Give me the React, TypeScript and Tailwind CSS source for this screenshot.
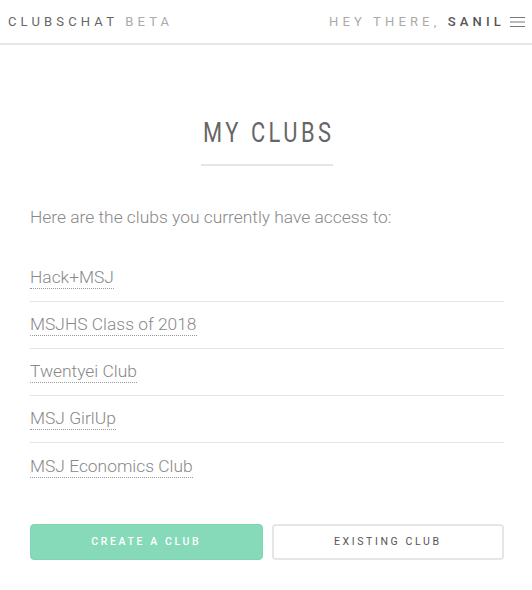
import * as React from "react"

const clubs = ["Hack+MSJ", "MSJHS Class of 2018", "Twentyei Club", "MSJ GirlUp", "MSJ Economics Club"]

export default function App() {
  return (
    <div className="min-h-[590px] bg-white font-['Roboto',sans-serif]">
      <header className="h-[45px] flex items-center justify-between pl-[8px] pr-[7px] border-b-2 border-[#e8e8e8]">
        <div className="text-[13px] tracking-[0.32em] leading-none">
          <span className="text-[#666]">CLUBSCHAT</span>{" "}
          <span className="text-[#aaa]">BETA</span>
        </div>
        <div className="flex items-center gap-[5px]">
          <div className="text-[13px] tracking-[0.32em] leading-none">
            <span className="text-[#aaa]">HEY THERE,</span>{" "}
            <span className="text-[#555] font-medium">SANIL</span>
          </div>
          <svg width="15" height="12" viewBox="0 0 15 12" className="text-[#777]">
            <path d="M0 1.5h15M0 6h15M0 10.5h15" stroke="currentColor" strokeWidth="1" />
          </svg>
        </div>
      </header>

      <main className="pl-[30px] pr-[28px] pt-[74px] pb-[30px]">
        <div className="flex flex-col items-center">
          <h1 className="inline-block origin-center scale-x-[0.78] text-[28px] leading-none text-[#666] tracking-[0.16em] pl-[4px]">
            MY CLUBS
          </h1>
          <div className="mt-[17px] w-[132px] h-[2px] bg-[#e6e6e6]"></div>
        </div>

        <p className="mt-[38px] text-[17.4px] font-light text-[#888]">
          Here are the clubs you currently have access to:
        </p>

        <ul className="mt-[25px]">
          {clubs.map((c, i) => (
            <li
              key={c}
              className={`h-[47px] flex items-center ${i < clubs.length - 1 ? "border-b border-[#e4e4e4]" : ""}`}
            >
              <a className="text-[17.4px] font-light text-[#888] leading-[20px] border-b border-dotted border-[#999] pb-[1px]">
                {c}
              </a>
            </li>
          ))}
        </ul>

        <div className="mt-[34px] grid grid-cols-2 gap-[9px]">
          <button className="h-[36px] rounded-[4px] bg-[#86dab9] border border-[#7fd4b2] text-white text-[10.5px] font-medium tracking-[0.25em]">
            CREATE A CLUB
          </button>
          <button className="h-[36px] rounded-[4px] bg-white border-2 border-[#e6e6e6] text-[#555] text-[10.5px] font-normal tracking-[0.25em]">
            EXISTING CLUB
          </button>
        </div>
      </main>
    </div>
  )
}
